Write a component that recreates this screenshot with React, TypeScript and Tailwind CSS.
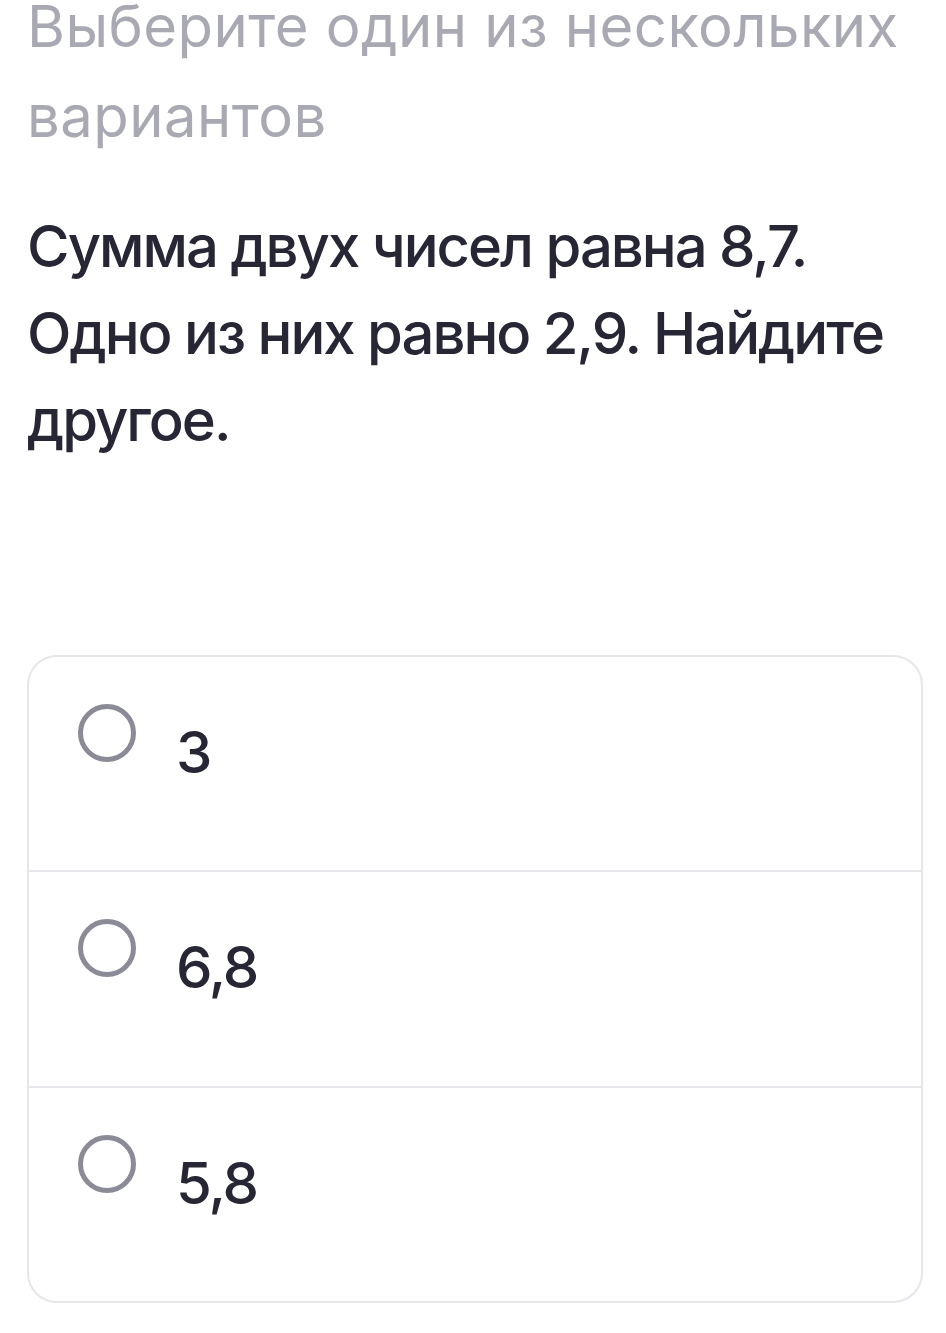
import React from "react";

const options = ["3", "6,8", "5,8"];

export default function App() {
  return (
    <div
      className="w-[946px] h-[1333px] overflow-hidden bg-white"
      style={{ fontFamily: "Inter, 'Noto Sans', sans-serif" }}
    >
      <div className="pl-[27px] pr-[20px]">
        <div className="mt-[-19px] text-[58px] leading-[90px] tracking-[0.45px] text-[#a9a9b4] font-normal">
          Выберите один из нескольких вариантов
        </div>
        <div className="mt-[42px] text-[58px] leading-[87px] tracking-[-2px] text-[#262634] font-medium">
          Сумма двух чисел равна 8,7. Одно из них равно 2,9. Найдите другое.
        </div>
      </div>
      <div className="mt-[191px] ml-[27px] w-[896px] h-[648px] rounded-[30px] border-2 border-[#e6e6eb] overflow-hidden flex flex-col">
        {options.map((o, i) => (
          <div
            key={o}
            className={`flex-1 flex items-start pl-[49px] pt-[47px] ${
              i > 0 ? "border-t-2 border-[#e6e6eb]" : ""
            }`}
          >
            <div className="w-[58px] h-[58px] rounded-full border-[5px] border-[#8b8b97] shrink-0" />
            <div className="ml-[40px] mt-[5px] text-[58px] leading-[87px] tracking-[-2px] text-[#262634] font-medium">
              {o}
            </div>
          </div>
        ))}
      </div>
    </div>
  );
}
